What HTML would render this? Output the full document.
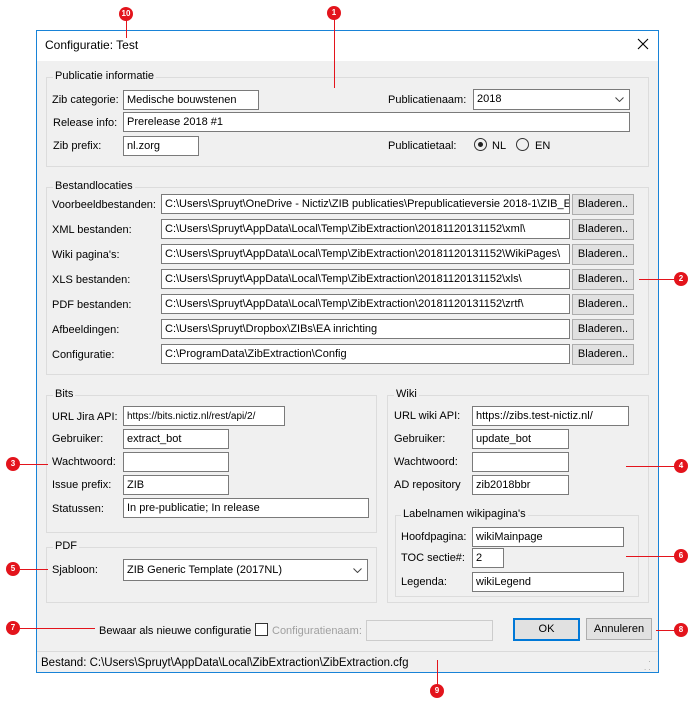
<!DOCTYPE html><html><head><style>
*{margin:0;padding:0;box-sizing:border-box}
body{width:694px;height:705px;background:#fff;position:relative;font-family:"Liberation Sans",sans-serif;font-size:11px;color:#000;overflow:hidden}
.a{position:absolute}
.win{left:36px;top:30px;width:623px;height:643px;border:1px solid #1883d7;background:#f0f0f0}
.tb{left:37px;top:31px;width:621px;height:30px;background:#fff}
.g{position:absolute;border:1px solid #dcdcdc}
.lg{position:absolute;background:#f0f0f0;padding:0 2px;white-space:nowrap}
.t{position:absolute;white-space:nowrap;line-height:14px}
.i{position:absolute;height:20px;border:1px solid #7a7a7a;background:#fff;padding:3px 3px;white-space:nowrap;overflow:hidden;line-height:13px;font-size:11px}
.b{position:absolute;height:21px;width:62px;border:1px solid #adadad;background:#e1e1e1;text-align:center;line-height:19px}
.c{position:absolute;width:14px;height:14px;border-radius:50%;background:#e3141c;color:#fff;font-size:8px;font-weight:bold;text-align:center;line-height:14px}
.l{position:absolute;background:#e3141c}
</style></head><body>
<div class="a win"></div><div class="a tb"></div>
<div class="t" style="left:45px;top:38px;font-size:12px">Configuratie: Test</div>
<svg class="a" style="left:637px;top:38px" width="12" height="12"><path d="M1 1L11 11M11 1L1 11" stroke="#000" stroke-width="1.1"/></svg>

<div class="g" style="left:46px;top:77px;width:603px;height:90px"></div>
<div class="lg" style="left:53px;top:70px">Publicatie informatie</div>
<div class="t" style="left:52px;top:93px">Zib categorie:</div><div class="i" style="left:123px;top:90px;width:136px">Medische bouwstenen</div>
<div class="t" style="left:388px;top:93px">Publicatienaam:</div><div class="i" style="left:473px;top:89px;width:157px;height:21px">2018<svg style="position:absolute;right:5px;top:7px" width="9" height="5"><path d="M0.5 0.5L4.5 4.5L8.5 0.5" stroke="#444" fill="none"/></svg></div>
<div class="t" style="left:53px;top:116px">Release info:</div><div class="i" style="left:123px;top:112px;width:507px">Prerelease 2018 #1</div>
<div class="t" style="left:53px;top:139px">Zib prefix:</div><div class="i" style="left:123px;top:136px;width:76px">nl.zorg</div>
<div class="t" style="left:388px;top:139px">Publicatietaal:</div>
<div class="a" style="left:474px;top:138px;width:13px;height:13px;border:1px solid #333;border-radius:50%"><div class="a" style="left:3px;top:3px;width:5px;height:5px;border-radius:50%;background:#222"></div></div>
<div class="t" style="left:492px;top:139px">NL</div>
<div class="a" style="left:516px;top:138px;width:13px;height:13px;border:1px solid #333;border-radius:50%"></div>
<div class="t" style="left:535px;top:139px">EN</div>

<div class="g" style="left:46px;top:187px;width:603px;height:188px"></div>
<div class="lg" style="left:53px;top:180px">Bestandlocaties</div>
<div class="t" style="left:52px;top:198px">Voorbeeldbestanden:</div><div class="i" style="left:161px;top:194px;width:409px">C:\Users\Spruyt\OneDrive - Nictiz\ZIB publicaties\Prepublicatieversie 2018-1\ZIB_E</div><div class="b" style="left:572px;top:194px">Bladeren..</div>
<div class="t" style="left:52px;top:223px">XML bestanden:</div><div class="i" style="left:161px;top:219px;width:409px">C:\Users\Spruyt\AppData\Local\Temp\ZibExtraction\20181120131152\xml\</div><div class="b" style="left:572px;top:219px">Bladeren..</div>
<div class="t" style="left:52px;top:248px">Wiki pagina's:</div><div class="i" style="left:161px;top:244px;width:409px">C:\Users\Spruyt\AppData\Local\Temp\ZibExtraction\20181120131152\WikiPages\</div><div class="b" style="left:572px;top:244px">Bladeren..</div>
<div class="t" style="left:52px;top:273px">XLS bestanden:</div><div class="i" style="left:161px;top:269px;width:409px">C:\Users\Spruyt\AppData\Local\Temp\ZibExtraction\20181120131152\xls\</div><div class="b" style="left:572px;top:269px">Bladeren..</div>
<div class="t" style="left:52px;top:298px">PDF bestanden:</div><div class="i" style="left:161px;top:294px;width:409px">C:\Users\Spruyt\AppData\Local\Temp\ZibExtraction\20181120131152\zrtf\</div><div class="b" style="left:572px;top:294px">Bladeren..</div>
<div class="t" style="left:52px;top:323px">Afbeeldingen:</div><div class="i" style="left:161px;top:319px;width:409px">C:\Users\Spruyt\Dropbox\ZIBs\EA inrichting</div><div class="b" style="left:572px;top:319px">Bladeren..</div>
<div class="t" style="left:52px;top:348px">Configuratie:</div><div class="i" style="left:161px;top:344px;width:409px">C:\ProgramData\ZibExtraction\Config</div><div class="b" style="left:572px;top:344px">Bladeren..</div>

<div class="g" style="left:46px;top:395px;width:331px;height:138px"></div>
<div class="lg" style="left:53px;top:388px">Bits</div>
<div class="t" style="left:52px;top:410px">URL Jira API:</div><div class="i" style="left:123px;top:406px;width:162px;font-size:10px">https://bits.nictiz.nl/rest/api/2/</div>
<div class="t" style="left:52px;top:432px">Gebruiker:</div><div class="i" style="left:123px;top:429px;width:106px">extract_bot</div>
<div class="t" style="left:52px;top:455px">Wachtwoord:</div><div class="i" style="left:123px;top:452px;width:106px"></div>
<div class="t" style="left:52px;top:478px">Issue prefix:</div><div class="i" style="left:123px;top:475px;width:106px">ZIB</div>
<div class="t" style="left:52px;top:502px">Statussen:</div><div class="i" style="left:123px;top:498px;width:246px">In pre-publicatie; In release</div>

<div class="g" style="left:46px;top:547px;width:331px;height:56px"></div>
<div class="lg" style="left:53px;top:540px">PDF</div>
<div class="t" style="left:52px;top:563px">Sjabloon:</div><div class="i" style="left:123px;top:559px;width:245px;height:22px;padding-top:4px">ZIB Generic Template (2017NL)<svg style="position:absolute;right:5px;top:8px" width="9" height="5"><path d="M0.5 0.5L4.5 4.5L8.5 0.5" stroke="#444" fill="none"/></svg></div>

<div class="g" style="left:387px;top:395px;width:262px;height:208px"></div>
<div class="lg" style="left:394px;top:388px">Wiki</div>
<div class="t" style="left:394px;top:409px">URL wiki API:</div><div class="i" style="left:472px;top:406px;width:157px">https://zibs.test-nictiz.nl/</div>
<div class="t" style="left:394px;top:432px">Gebruiker:</div><div class="i" style="left:472px;top:429px;width:97px">update_bot</div>
<div class="t" style="left:394px;top:455px">Wachtwoord:</div><div class="i" style="left:472px;top:452px;width:97px"></div>
<div class="t" style="left:394px;top:478px">AD repository</div><div class="i" style="left:472px;top:475px;width:97px">zib2018bbr</div>
<div class="g" style="left:395px;top:515px;width:244px;height:82px"></div>
<div class="lg" style="left:401px;top:508px">Labelnamen wikipagina's</div>
<div class="t" style="left:401px;top:530px">Hoofdpagina:</div><div class="i" style="left:472px;top:527px;width:152px">wikiMainpage</div>
<div class="t" style="left:401px;top:551px">TOC sectie#:</div><div class="i" style="left:472px;top:548px;width:32px">2</div>
<div class="t" style="left:401px;top:575px">Legenda:</div><div class="i" style="left:472px;top:572px;width:152px">wikiLegend</div>

<div class="t" style="left:99px;top:624px">Bewaar als nieuwe configuratie</div>
<div class="a" style="left:255px;top:623px;width:13px;height:13px;border:1px solid #333;background:#fff"></div>
<div class="t" style="left:272px;top:624px;color:#a0a0a0">Configuratienaam:</div>
<div class="a" style="left:366px;top:620px;width:127px;height:21px;border:1px solid #ccc;background:#f0f0f0"></div>
<div class="b" style="left:513px;top:618px;width:67px;height:23px;border:2px solid #0078d7;line-height:19px">OK</div>
<div class="b" style="left:586px;top:618px;width:66px;height:22px;line-height:20px">Annuleren</div>
<div class="a" style="left:37px;top:651px;width:621px;height:1px;background:#dadada"></div>
<div class="t" style="left:41px;top:656px;font-size:11.5px">Bestand: C:\Users\Spruyt\AppData\Local\ZibExtraction\ZibExtraction.cfg</div>
<div class="t" style="left:644px;top:656px;color:#999;font-size:8px;line-height:8px">&nbsp;&nbsp;.<br>.&nbsp;.</div>

<div class="l" style="left:126px;top:18px;width:1px;height:20px"></div><div class="c" style="left:119px;top:7px">10</div>
<div class="l" style="left:334px;top:18px;width:1px;height:70px"></div><div class="c" style="left:327px;top:6px">1</div>
<div class="l" style="left:639px;top:279px;width:40px;height:1px"></div><div class="c" style="left:674px;top:272px">2</div>
<div class="l" style="left:15px;top:464px;width:33px;height:1px"></div><div class="c" style="left:6px;top:457px">3</div>
<div class="l" style="left:626px;top:466px;width:53px;height:1px"></div><div class="c" style="left:674px;top:459px">4</div>
<div class="l" style="left:15px;top:569px;width:33px;height:1px"></div><div class="c" style="left:6px;top:562px">5</div>
<div class="l" style="left:626px;top:556px;width:53px;height:1px"></div><div class="c" style="left:674px;top:549px">6</div>
<div class="l" style="left:15px;top:628px;width:80px;height:1px"></div><div class="c" style="left:6px;top:621px">7</div>
<div class="l" style="left:656px;top:630px;width:23px;height:1px"></div><div class="c" style="left:674px;top:623px">8</div>
<div class="l" style="left:437px;top:660px;width:1px;height:28px"></div><div class="c" style="left:430px;top:684px">9</div>
</body></html>
